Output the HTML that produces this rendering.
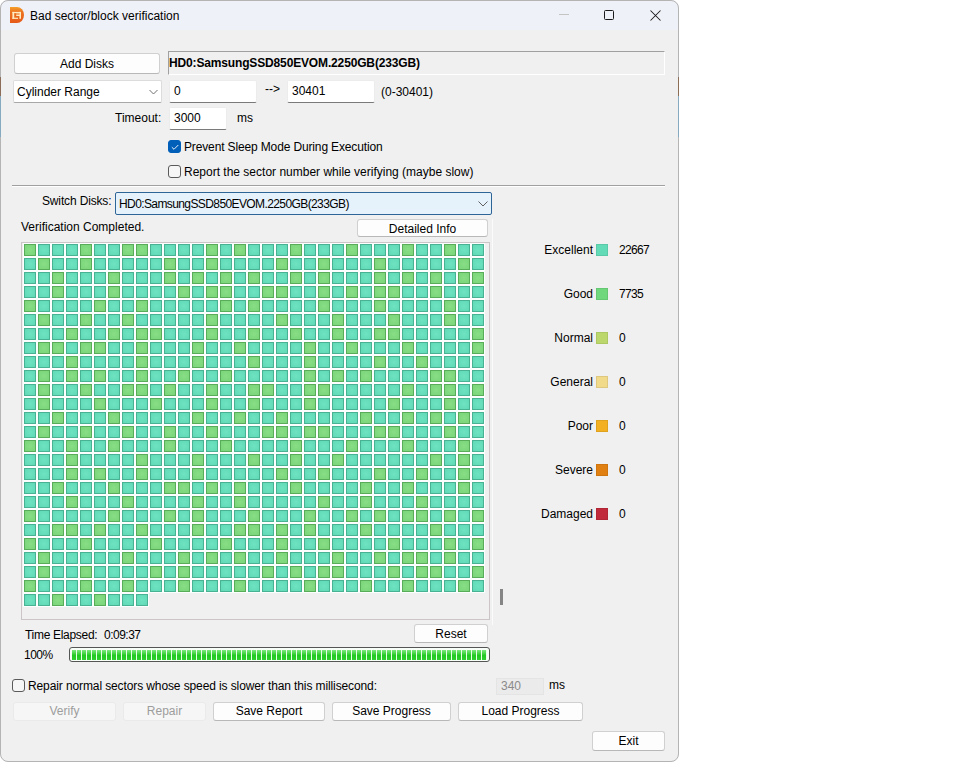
<!DOCTYPE html>
<html><head><meta charset="utf-8">
<style>
*{box-sizing:border-box;margin:0;padding:0}
html,body{width:960px;height:763px;background:#fff;overflow:hidden}
body{position:relative;font-family:"Liberation Sans",sans-serif;font-size:12px;color:#000}
#win{position:absolute;left:0;top:0;width:679px;height:762px;background:#f0f0f0;border-radius:8px;overflow:hidden}
#frame{position:absolute;left:0;top:0;width:679px;height:762px;border:1px solid #b4b4b4;border-radius:8px;z-index:10}
#tb{position:absolute;left:0;top:0;width:679px;height:30px;background:#eff1f8}
.a{position:absolute;white-space:pre;line-height:14px}
.btn{position:absolute;background:#fdfdfd;border:1px solid #d0d0d0;border-bottom-color:#b8b8b8;border-radius:3px;text-align:center;line-height:16px;color:#000}
.btn.dis{background:#f6f6f6;border-color:#eaeaea;color:#9d9d9d}
.ed{position:absolute;background:#fff;border:1px solid #ececec;border-bottom:1px solid #7a7a7a;border-radius:2px;line-height:21px;padding-left:4px}
.cb{position:absolute;width:13px;height:13px;border:1px solid #5a5a5a;border-radius:3px;background:#f6f6f6}
.cb.on{background:#005fb8;border-color:#005fb8}
#grid{position:absolute;left:21px;top:242px;width:469px;height:378px;border:1px solid #cbc5c8}
#cells{position:absolute;left:1px;top:0px;width:462px;display:flex;flex-wrap:wrap}
#cells i{display:block;width:14px;height:14px;border:1px solid #fbfffd;background:radial-gradient(circle,#6fe3c2 0%,#62dab8 70%,#58d0ae 100%);box-shadow:inset 0 0 0 1px #48b292}
#cells i.g{background:radial-gradient(circle,#88de86 0%,#7cd67a 70%,#70cc70 100%);box-shadow:inset 0 0 0 1px #58ac5a}
.sw{position:absolute;left:596px;width:12px;height:12px;box-shadow:inset 0 0 0 1px rgba(0,0,0,0.08)}
.lg{position:absolute;white-space:pre;line-height:14px;text-align:right;width:100px;left:493px}
.nm{position:absolute;white-space:pre;line-height:14px;left:619px;letter-spacing:-0.7px}
#prog{position:absolute;left:69px;top:647px;width:421px;height:15px;border:1px solid #555;border-radius:3px;background:#f8fff8;overflow:hidden}
#prog .bar{position:absolute;left:2px;top:2px;width:415px;height:10px;background:repeating-linear-gradient(90deg,rgba(0,0,0,0) 0 4px,#e8ffe8 4px 5px),linear-gradient(#7ee87e,#22c922 55%,#30d030)}
</style></head><body>
<div id="win">
  <div id="tb">
    <svg style="position:absolute;left:10px;top:7px" width="15" height="16" viewBox="0 0 15 16">
      <defs><linearGradient id="ig" x1="0" y1="0" x2="0" y2="1"><stop offset="0" stop-color="#f5a02a"/><stop offset="0.3" stop-color="#ec7420"/><stop offset="1" stop-color="#e65a1a"/></linearGradient></defs>
      <path d="M0 0H7A7 8 0 0 1 7 16H0Z" fill="url(#ig)"/>
      <g fill="#ffecc0"><rect x="2.4" y="4.9" width="8.6" height="1.2"/><rect x="2.4" y="4.9" width="1.8" height="6.9"/><rect x="2.4" y="10.7" width="5.6" height="1.2"/><rect x="9.4" y="4.9" width="1.6" height="6.9"/><rect x="6.2" y="7.9" width="4.8" height="1.1"/><rect x="6.2" y="6.1" width="3.2" height="1.8" opacity="0.45"/></g>
    </svg>
    <div class="a" style="left:30px;top:9px">Bad sector/block verification</div>
    <div style="position:absolute;left:559px;top:14px;width:10px;height:1px;background:#c4c4c4"></div>
    <div style="position:absolute;left:604px;top:10px;width:10px;height:10px;border:1px solid #1a1a1a;border-radius:1.5px"></div>
    <svg style="position:absolute;left:650px;top:10px" width="11" height="11" viewBox="0 0 11 11"><path d="M0.5 0.5L10.5 10.5M10.5 0.5L0.5 10.5" stroke="#1a1a1a" stroke-width="1.05"/></svg>
  </div>

  <div class="btn" style="left:14px;top:53px;width:146px;height:21px;line-height:20px">Add Disks</div>
  <div style="position:absolute;left:168px;top:51px;width:497px;height:24px;border-top:1px solid #a0a0a0;border-left:1px solid #a0a0a0;border-right:1px solid #fff;border-bottom:1px solid #fff;background:#f0f0f0;font-weight:bold;line-height:23px;padding-left:0;letter-spacing:-0.15px">HD0:SamsungSSD850EVOM.2250GB(233GB)</div>

  <div class="ed" style="left:13px;top:80px;width:149px;height:23px;padding-left:3px;border-color:#dcdcdc;border-bottom-color:#a8a8a8;line-height:22px">Cylinder Range</div>
  <svg style="position:absolute;left:149px;top:89px" width="9" height="6" viewBox="0 0 9 6"><path d="M0.5 1L4.5 5L8.5 1" fill="none" stroke="#707070" stroke-width="1"/></svg>
  <div class="ed" style="left:169px;top:80px;width:88px;height:23px">0</div>
  <div class="a" style="left:265px;top:82px">--&gt;</div>
  <div class="ed" style="left:287px;top:80px;width:88px;height:23px">30401</div>
  <div class="a" style="left:381px;top:85px">(0-30401)</div>

  <div class="a" style="left:115px;top:111px">Timeout:</div>
  <div class="ed" style="left:169px;top:107px;width:58px;height:23px;line-height:21px">3000</div>
  <div class="a" style="left:237px;top:111px">ms</div>

  <div class="cb on" style="left:168px;top:140px"><svg style="position:absolute;left:1px;top:2px" width="10" height="8" viewBox="0 0 10 8"><path d="M1.8 4.2L4 6.3L8.3 2" fill="none" stroke="#e8f0fa" stroke-width="1"/></svg></div>
  <div class="a" style="left:184px;top:140px;letter-spacing:-0.14px">Prevent Sleep Mode During Execution</div>
  <div class="cb" style="left:168px;top:165px"></div>
  <div class="a" style="left:184px;top:165px">Report the sector number while verifying (maybe slow)</div>

  <div style="position:absolute;left:12px;top:185px;width:653px;height:1px;background:#a0a0a0"></div>
  <div style="position:absolute;left:12px;top:186px;width:653px;height:1px;background:#fff"></div>

  <div class="a" style="left:42px;top:194px;letter-spacing:-0.15px">Switch Disks:</div>
  <div style="position:absolute;left:115px;top:192px;width:377px;height:23px;border:1px solid #2e6597;border-radius:2px;background:#e6f2fb;line-height:23px;padding-left:3px;letter-spacing:-0.6px">HD0:SamsungSSD850EVOM.2250GB(233GB)</div>
  <svg style="position:absolute;left:478px;top:201px" width="10" height="6" viewBox="0 0 10 6"><path d="M0.5 0.5L5 5L9.5 0.5" fill="none" stroke="#606060" stroke-width="1"/></svg>

  <div class="a" style="left:21px;top:220px">Verification Completed.</div>
  <div class="btn" style="left:357px;top:219px;width:131px;height:18px;line-height:18px">Detailed Info</div>

  <div id="grid"><div id="cells"><i class=g></i><i></i><i></i><i></i><i class=g></i><i></i><i></i><i class=g></i><i class=g></i><i></i><i></i><i></i><i></i><i class=g></i><i></i><i class=g></i><i></i><i></i><i></i><i class=g></i><i></i><i></i><i></i><i class=g></i><i></i><i></i><i></i><i class=g></i><i></i><i></i><i class=g></i><i></i><i></i><i></i><i class=g></i><i></i><i></i><i class=g></i><i></i><i></i><i></i><i></i><i></i><i class=g></i><i></i><i></i><i class=g></i><i></i><i></i><i></i><i></i><i class=g></i><i></i><i></i><i class=g></i><i></i><i></i><i></i><i class=g></i><i></i><i></i><i></i><i></i><i></i><i class=g></i><i></i><i></i><i></i><i class=g></i><i></i><i></i><i></i><i class=g></i><i></i><i></i><i></i><i class=g></i><i></i><i class=g></i><i></i><i class=g></i><i></i><i class=g></i><i></i><i></i><i class=g></i><i></i><i class=g></i><i></i><i></i><i></i><i class=g></i><i></i><i class=g></i><i></i><i class=g></i><i></i><i class=g></i><i class=g></i><i></i><i></i><i class=g></i><i></i><i></i><i></i><i class=g></i><i></i><i></i><i></i><i></i><i class=g></i><i></i><i class=g></i><i class=g></i><i></i><i></i><i class=g></i><i class=g></i><i></i><i></i><i class=g></i><i></i><i class=g></i><i></i><i class=g></i><i class=g></i><i></i><i></i><i class=g></i><i></i><i></i><i></i><i class=g></i><i></i><i></i><i></i><i></i><i class=g></i><i></i><i></i><i class=g></i><i></i><i></i><i></i><i></i><i></i><i class=g></i><i></i><i class=g></i><i></i><i></i><i></i><i></i><i class=g></i><i></i><i></i><i></i><i class=g></i><i></i><i></i><i></i><i></i><i class=g></i><i></i><i></i><i></i><i class=g></i><i></i><i></i><i class=g></i><i></i><i></i><i class=g></i><i></i><i></i><i></i><i></i><i></i><i class=g></i><i></i><i></i><i></i><i></i><i class=g></i><i></i><i></i><i></i><i class=g></i><i></i><i></i><i></i><i class=g></i><i></i><i></i><i></i><i class=g></i><i></i><i></i><i></i><i></i><i></i><i class=g></i><i></i><i></i><i class=g></i><i></i><i class=g></i><i class=g></i><i></i><i></i><i></i><i class=g></i><i></i><i></i><i class=g></i><i></i><i></i><i class=g></i><i></i><i></i><i class=g></i><i></i><i></i><i class=g></i><i class=g></i><i></i><i></i><i></i><i></i><i></i><i class=g></i><i></i><i class=g></i><i class=g></i><i></i><i class=g></i><i class=g></i><i></i><i></i><i class=g></i><i></i><i></i><i></i><i class=g></i><i></i><i></i><i class=g></i><i></i><i></i><i></i><i></i><i class=g></i><i></i><i></i><i class=g></i><i></i><i></i><i></i><i class=g></i><i></i><i></i><i></i><i></i><i class=g></i><i></i><i></i><i></i><i class=g></i><i></i><i></i><i></i><i></i><i class=g></i><i></i><i></i><i></i><i class=g></i><i></i><i></i><i></i><i class=g></i><i></i><i></i><i></i><i class=g></i><i></i><i></i><i></i><i></i><i class=g></i><i></i><i></i><i class=g></i><i></i><i></i><i></i><i></i><i></i><i class=g></i><i></i><i class=g></i><i></i><i class=g></i><i></i><i></i><i class=g></i><i></i><i></i><i class=g></i><i></i><i></i><i class=g></i><i></i><i></i><i></i><i></i><i></i><i class=g></i><i></i><i class=g></i><i></i><i class=g></i><i></i><i></i><i></i><i></i><i class=g></i><i class=g></i><i></i><i></i><i></i><i class=g></i><i></i><i></i><i class=g></i><i></i><i></i><i class=g></i><i class=g></i><i></i><i class=g></i><i></i><i></i><i class=g></i><i></i><i></i><i class=g></i><i class=g></i><i></i><i></i><i class=g></i><i class=g></i><i></i><i></i><i></i><i></i><i></i><i class=g></i><i></i><i class=g></i><i class=g></i><i></i><i class=g></i><i></i><i class=g></i><i></i><i></i><i></i><i class=g></i><i></i><i></i><i></i><i class=g></i><i></i><i></i><i></i><i class=g></i><i></i><i></i><i class=g></i><i></i><i></i><i></i><i class=g></i><i></i><i></i><i></i><i></i><i></i><i class=g></i><i></i><i></i><i></i><i class=g></i><i></i><i></i><i></i><i></i><i class=g></i><i></i><i></i><i></i><i class=g></i><i></i><i></i><i></i><i></i><i></i><i class=g></i><i></i><i></i><i class=g></i><i></i><i></i><i class=g></i><i></i><i></i><i></i><i></i><i></i><i class=g></i><i></i><i></i><i class=g></i><i></i><i class=g></i><i></i><i class=g></i><i></i><i></i><i class=g></i><i></i><i></i><i class=g></i><i></i><i></i><i class=g></i><i></i><i></i><i class=g></i><i></i><i></i><i class=g></i><i></i><i></i><i></i><i class=g></i><i class=g></i><i></i><i class=g></i><i class=g></i><i></i><i></i><i></i><i class=g></i><i class=g></i><i></i><i></i><i></i><i class=g></i><i></i><i></i><i class=g></i><i></i><i></i><i class=g></i><i></i><i></i><i class=g></i><i></i><i></i><i></i><i class=g></i><i></i><i></i><i></i><i class=g></i><i></i><i></i><i></i><i></i><i class=g></i><i></i><i></i><i></i><i class=g></i><i></i><i></i><i></i><i class=g></i><i></i><i></i><i></i><i class=g></i><i></i><i></i><i></i><i></i><i class=g></i><i></i><i></i><i></i><i></i><i class=g></i><i></i><i></i><i></i><i class=g></i><i></i><i></i><i></i><i class=g></i><i></i><i></i><i class=g></i><i></i><i></i><i class=g></i><i></i><i></i><i></i><i></i><i></i><i></i><i class=g></i><i></i><i class=g></i><i></i><i></i><i></i><i></i><i class=g></i><i></i><i class=g></i><i></i><i></i><i class=g></i><i></i><i></i><i></i><i class=g></i><i></i><i></i><i></i><i></i><i></i><i class=g></i><i></i><i></i><i class=g></i><i></i><i></i><i></i><i class=g></i><i></i><i></i><i class=g></i><i></i><i></i><i class=g></i><i></i><i></i><i></i><i class=g></i><i></i><i></i><i></i><i class=g></i><i></i><i></i><i></i><i class=g></i><i class=g></i><i></i><i class=g></i><i></i><i class=g></i><i></i><i></i><i></i><i class=g></i><i></i><i></i><i></i><i></i><i class=g></i><i></i><i></i><i class=g></i><i></i><i></i><i></i><i class=g></i><i></i><i></i><i></i><i></i><i class=g></i><i></i><i></i><i></i><i class=g></i><i></i><i></i><i></i><i></i><i class=g></i><i></i><i></i><i class=g></i><i></i><i></i><i></i><i></i><i></i><i class=g></i><i></i><i></i><i class=g></i><i></i><i></i><i></i><i class=g></i><i></i><i></i><i></i><i></i><i class=g></i><i></i><i></i><i></i><i></i><i></i><i class=g></i><i></i><i></i><i></i><i class=g></i><i></i><i class=g></i><i></i><i></i><i></i><i class=g></i><i></i><i></i><i></i><i class=g></i><i></i><i></i><i class=g></i><i></i><i class=g></i><i></i><i class=g></i><i class=g></i><i></i><i class=g></i><i></i><i class=g></i><i></i><i></i><i class=g></i><i class=g></i><i></i><i class=g></i><i></i><i></i><i class=g></i><i></i><i></i><i></i><i class=g></i><i></i><i></i><i class=g></i><i class=g></i><i></i><i class=g></i><i></i><i class=g></i><i></i><i></i><i></i><i class=g></i><i></i><i></i><i></i><i></i><i class=g></i><i></i><i></i><i></i><i class=g></i><i></i><i></i><i></i><i class=g></i><i></i><i></i><i></i><i></i><i class=g></i><i></i><i></i><i></i><i></i><i class=g></i><i></i><i></i><i></i><i class=g></i><i></i><i></i><i class=g></i><i></i><i></i><i></i><i></i><i class=g></i><i></i><i></i><i></i><i class=g></i><i></i><i class=g></i><i></i><i class=g></i><i></i><i></i><i></i><i></i><i></i><i class=g></i><i></i><i></i><i></i><i class=g></i><i></i><i class=g></i><i></i><i class=g></i><i></i><i></i><i class=g></i><i></i><i></i><i></i><i class=g></i><i></i><i></i><i class=g></i><i></i><i class=g></i><i class=g></i><i></i><i class=g></i><i></i><i></i><i></i><i class=g></i><i></i><i></i><i class=g></i><i></i><i></i><i></i><i></i><i class=g></i><i></i><i class=g></i><i></i><i></i><i></i><i></i><i></i><i class=g></i><i></i><i class=g></i><i></i><i class=g></i><i class=g></i><i></i><i></i><i></i><i class=g></i><i></i><i class=g></i><i class=g></i><i></i><i></i><i class=g></i><i class=g></i><i></i><i></i><i></i><i class=g></i><i></i><i></i><i class=g></i><i></i><i></i><i></i><i class=g></i><i></i><i></i><i></i><i class=g></i><i></i><i></i><i></i><i></i><i class=g></i><i></i><i></i><i></i><i class=g></i><i></i><i></i><i class=g></i><i></i><i></i><i></i><i class=g></i><i></i><i></i><i></i><i class=g></i><i></i><i></i><i class=g></i><i></i><i></i><i></i></div></div>
  <div style="position:absolute;left:492px;top:219px;width:1px;height:406px;background:#fbfbfb"></div>
  <div style="position:absolute;left:500px;top:589px;width:3px;height:16px;background:#858585"></div>

  <div class="lg" style="top:243px">Excellent</div><div class="sw" style="top:244px;background:#62dbb6"></div><div class="nm" style="top:243px">22667</div>
  <div class="lg" style="top:287px">Good</div><div class="sw" style="top:288px;background:#6fd87c"></div><div class="nm" style="top:287px">7735</div>
  <div class="lg" style="top:331px">Normal</div><div class="sw" style="top:332px;background:#bcd86c"></div><div class="nm" style="top:331px">0</div>
  <div class="lg" style="top:375px">General</div><div class="sw" style="top:376px;background:#f1da8a"></div><div class="nm" style="top:375px">0</div>
  <div class="lg" style="top:419px">Poor</div><div class="sw" style="top:420px;background:#f2b022"></div><div class="nm" style="top:419px">0</div>
  <div class="lg" style="top:463px">Severe</div><div class="sw" style="top:464px;background:#e07f12"></div><div class="nm" style="top:463px">0</div>
  <div class="lg" style="top:507px">Damaged</div><div class="sw" style="top:508px;background:#c02a3a"></div><div class="nm" style="top:507px">0</div>

  <div class="a" style="left:25px;top:628px;letter-spacing:-0.3px">Time Elapsed:</div>
  <div class="a" style="left:104px;top:628px;letter-spacing:-0.5px">0:09:37</div>
  <div class="btn" style="left:414px;top:624px;width:74px;height:19px;line-height:18px">Reset</div>
  <div class="a" style="left:24px;top:648px;letter-spacing:-0.5px">100%</div>
  <div id="prog"><div class="bar"></div></div>

  <div class="cb" style="left:12px;top:679px"></div>
  <div class="a" style="left:28px;top:679px;letter-spacing:-0.11px">Repair normal sectors whose speed is slower than this millisecond:</div>
  <div style="position:absolute;left:496px;top:678px;width:48px;height:17px;background:#ebebeb;border:1px solid #e4e4e4;color:#8a8a8a;line-height:15px;padding-left:4px">340</div>
  <div class="a" style="left:549px;top:678px">ms</div>

  <div class="btn dis" style="left:13px;top:702px;width:103px;height:19px">Verify</div>
  <div class="btn dis" style="left:123px;top:702px;width:83px;height:19px">Repair</div>
  <div class="btn" style="left:213px;top:702px;width:112px;height:19px">Save Report</div>
  <div class="btn" style="left:332px;top:702px;width:119px;height:19px">Save Progress</div>
  <div class="btn" style="left:458px;top:702px;width:125px;height:19px">Load Progress</div>
  <div class="btn" style="left:592px;top:731px;width:73px;height:20px;line-height:18px">Exit</div>
</div>
<div id="frame"></div>
<div style="position:absolute;left:0;top:77px;width:1px;height:19px;background:#8c6e58;z-index:11"></div><div style="position:absolute;left:0;top:96px;width:1px;height:41px;background:#86aac0;z-index:11"></div>
<div style="position:absolute;left:678px;top:77px;width:1px;height:19px;background:#8c6e58;z-index:11"></div><div style="position:absolute;left:678px;top:96px;width:1px;height:41px;background:#86aac0;z-index:11"></div>
</body></html>
